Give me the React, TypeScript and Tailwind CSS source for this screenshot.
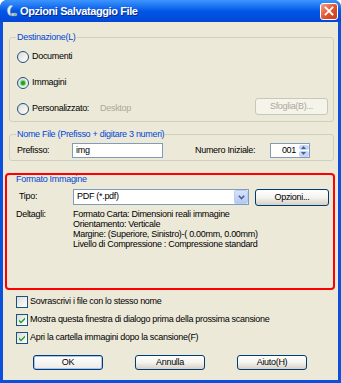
import React from 'react';

const font = { fontFamily: '"Liberation Sans", Arial, sans-serif' };

const Radio = ({ checked }: { checked?: boolean }) => (
    <span className="w-[12px] h-[12px] rounded-full border border-[#1c5180] bg-gradient-to-br from-[#dcdcd6] to-white flex items-center justify-center shrink-0">
        {checked && <span className="w-[4px] h-[4px] rounded-full bg-[#21a121] shadow-[0_0_1px_1px_#6fcf6f]"></span>}
    </span>
);

const Check = ({ checked }: { checked?: boolean }) => (
    <span className="w-[12px] h-[12px] border border-[#1c5180] bg-gradient-to-br from-[#dcdcd6] to-white flex items-center justify-center shrink-0">
        {checked && (
            <svg width="8" height="8" viewBox="0 0 8 8">
                <path d="M1 3.5 L3 5.5 L7 1.5 L7 3.5 L3 7.5 L1 5.5 Z" fill="#21a121" />
            </svg>
        )}
    </span>
);

const Button = ({ children, w, disabled, def }: { children: React.ReactNode; w: string; disabled?: boolean; def?: boolean }) => (
    <div
        className={`${w} h-full rounded-[3px] border flex items-center justify-center text-[9px] ${
            disabled
                ? 'border-[#c9c7ba] bg-[#f5f4ea] text-[#aca899]'
                : def
                ? 'border-[#003c74] bg-gradient-to-b from-white to-[#ecebe6] text-black shadow-[inset_0_0_0_1px_#a9c4f5]'
                : 'border-[#003c74] bg-gradient-to-b from-white via-[#f4f3ee] to-[#d6d0c5] text-black'
        }`}
    >
        {children}
    </div>
);

const Legend = ({ children }: { children: React.ReactNode }) => (
    <span className="absolute -top-[7px] left-[6px] px-[1px] bg-[#ece9d8] text-[#0046d5] leading-[12px]">{children}</span>
);

export default function App() {
    return (
        <div style={font} className="w-[341px] h-[383px] bg-[#0b50dc] rounded-t-[7px] flex flex-col overflow-hidden text-[9px] tracking-[-0.3px] text-black">
            {/* Title bar */}
            <div className="h-[22px] shrink-0 flex items-center pl-[4px] pr-[3px] bg-gradient-to-b from-[#3d95ff] via-[#0058e6] to-[#0446d6] rounded-t-[7px]">
                <svg width="14" height="14" viewBox="0 0 14 14" className="shrink-0">
                    <path d="M7 1 C3 3 2 7 5 11 L8 12 C5 8 6 4 9 2 Z" fill="#e8eef8" stroke="#7d94b8" strokeWidth="0.6" />
                    <rect x="7" y="9" width="6" height="3" rx="1" fill="#c8d4e6" stroke="#5d7090" strokeWidth="0.6" />
                    <circle cx="11" cy="10.5" r="0.8" fill="#3fbf3f" />
                </svg>
                <span className="ml-[2px] text-white font-bold text-[11px] tracking-[-0.4px] [text-shadow:1px_1px_0_#0a2a8a]">Opzioni Salvataggio File</span>
                <div className="ml-auto w-[18px] h-[17px] rounded-[3px] border border-white bg-gradient-to-br from-[#f1a08a] via-[#e2552f] to-[#c6401c] flex items-center justify-center">
                    <svg width="10" height="10" viewBox="0 0 10 10">
                        <path d="M1.5 1.5 L8.5 8.5 M8.5 1.5 L1.5 8.5" stroke="white" strokeWidth="1.8" strokeLinecap="square" />
                    </svg>
                </div>
            </div>

            {/* Body */}
            <div className="mx-[3px] h-[358px] bg-[#ece9d8] flex flex-col">
                {/* Destinazione */}
                <div className="relative mt-[15px] ml-[6px] w-[325px] h-[85px] border border-[#d0d0bf] rounded-[3px] flex flex-col pt-[11px] pl-[7px] pr-[5px] gap-[10px]">
                    <Legend>Destinazione(L)</Legend>
                    <div className="h-[16px] flex items-center gap-[3px]">
                        <Radio />
                        <span>Documenti</span>
                    </div>
                    <div className="h-[16px] flex items-center gap-[3px]">
                        <Radio checked />
                        <span>Immagini</span>
                    </div>
                    <div className="h-[16px] flex items-center gap-[3px]">
                        <Radio />
                        <span>Personalizzato:</span>
                        <span className="ml-[8px] text-[#aca899]">Desktop</span>
                        <div className="ml-auto h-[17px] -mt-[5px]">
                            <Button w="w-[73px]" disabled>
                                Sfoglia(B)...
                            </Button>
                        </div>
                    </div>
                </div>

                {/* Nome File */}
                <div className="relative mt-[12px] ml-[6px] w-[325px] h-[27px] border border-[#d0d0bf] rounded-[3px] flex items-start pt-[8px] pl-[7px]">
                    <Legend>Nome File (Prefisso + digitare 3 numeri)</Legend>
                    <span className="w-[55px] h-[15px] flex items-center">Prefisso:</span>
                    <div className="w-[91px] h-[15px] border border-[#7f9db9] bg-white flex items-center pl-[3px]">img</div>
                    <span className="ml-[32px] w-[75px] h-[15px] flex items-center">Numero Iniziale:</span>
                    <div className="w-[40px] h-[15px] border border-[#7f9db9] bg-white flex items-center">
                        <span className="flex-1 text-right pr-[2px]">001</span>
                        <div className="w-[11px] h-full flex flex-col gap-[1px] p-[0.5px]">
                            <div className="flex-1 rounded-[2px] bg-[#c6d5fb] flex items-center justify-center">
                                <svg width="5" height="3" viewBox="0 0 5 3"><path d="M0 3 L2.5 0 L5 3 Z" fill="#4d6185" /></svg>
                            </div>
                            <div className="flex-1 rounded-[2px] bg-[#c6d5fb] flex items-center justify-center">
                                <svg width="5" height="3" viewBox="0 0 5 3"><path d="M0 0 L2.5 3 L5 0 Z" fill="#4d6185" /></svg>
                            </div>
                        </div>
                    </div>
                </div>

                {/* Formato Immagine (highlighted) */}
                <div className="mt-[12px] ml-[2px] w-[330px] h-[117px] border-2 border-[#ff0000] rounded-[4px] flex flex-col pl-[9px]">
                    <span className="leading-[9px] text-[#0046d5]">Formato Immagine</span>
                    <div className="mt-[5px] h-[16px] flex items-center">
                        <span className="ml-[3px] w-[54px]">Tipo:</span>
                        <div className="w-[176px] h-[16px] border border-[#7f9db9] bg-white flex items-center pl-[3px]">
                            <span className="flex-1">PDF (*.pdf)</span>
                            <div className="w-[14px] h-[14px] rounded-[2px] bg-gradient-to-b from-[#d7e3fd] to-[#b3c8f6] border border-[#bccdf4] flex items-center justify-center">
                                <svg width="7" height="5" viewBox="0 0 7 5"><path d="M0.8 0.8 L3.5 3.6 L6.2 0.8" stroke="#4d6185" strokeWidth="1.6" fill="none" /></svg>
                            </div>
                        </div>
                        <div className="ml-[6px] h-[17px] mt-[1px]">
                            <Button w="w-[74px]">Opzioni...</Button>
                        </div>
                    </div>
                    <div className="mt-[4px] flex">
                        <span className="w-[57px] leading-[10px]">Deltagli:</span>
                        <div className="flex flex-col leading-[10px]">
                            <span>Formato Carta: Dimensioni reali immagine</span>
                            <span>Orientamento: Verticale</span>
                            <span>Margine: (Superiore, Sinistro)-( 0.00mm, 0.00mm)</span>
                            <span>Livello di Compressione : Compressione standard</span>
                        </div>
                    </div>
                </div>

                {/* Checkboxes */}
                <div className="mt-[5px] ml-[13px] flex flex-col gap-[5px]">
                    <div className="h-[13px] flex items-center gap-[2px]">
                        <Check />
                        <span>Sovrascrivi i file con lo stesso nome</span>
                    </div>
                    <div className="h-[13px] flex items-center gap-[2px]">
                        <Check checked />
                        <span>Mostra questa finestra di dialogo prima della prossima scansione</span>
                    </div>
                    <div className="h-[13px] flex items-center gap-[2px]">
                        <Check checked />
                        <span>Apri la cartella immagini dopo la scansione(F)</span>
                    </div>
                </div>

                {/* Buttons */}
                <div className="mt-[11px] ml-[30px] h-[15px] flex gap-[32px]">
                    <Button w="w-[70px]" def>OK</Button>
                    <Button w="w-[70px]">Annulla</Button>
                    <Button w="w-[70px]">Aiuto(H)</Button>
                </div>
            </div>
        </div>
    );
}
